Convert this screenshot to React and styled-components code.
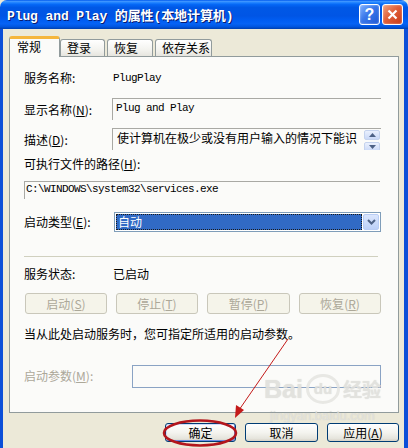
import React from "react";
import styled, { createGlobalStyle } from "styled-components";

const GlobalStyle = createGlobalStyle`
  html, body {
    margin: 0;
    padding: 0;
    background: #ece9d8;
  }
  body {
    font-family: "Noto Sans CJK SC", "Liberation Sans", sans-serif;
    font-size: 12px;
  }
`;

const Window = styled.div`
  position: relative;
  width: 408px;
  height: 448px;
  overflow: hidden;
  display: flex;
  flex-direction: column;
`;

const TitleBar = styled.div`
  height: 29px;
  flex: none;
  display: flex;
  align-items: center;
  padding: 0 5px 0 7px;
  border-radius: 7px 7px 0 0;
  background: linear-gradient(
    to bottom,
    #0058ee 0%,
    #3d95ff 5%,
    #1a7fff 10%,
    #0466f5 16%,
    #0058e6 26%,
    #0055e5 55%,
    #005df2 70%,
    #0663f5 82%,
    #0056e0 92%,
    #003fae 100%
  );
`;

const Title = styled.div`
  flex: 1;
  color: #fff;
  font-family: "Liberation Mono", "Noto Sans CJK SC", monospace;
  font-weight: bold;
  font-size: 13px;
  letter-spacing: -0.1px;
  text-shadow: 1px 1px 0 #0a1a6e;
  white-space: nowrap;
`;

const CapButton = styled.div`
  width: 19px;
  height: 19px;
  margin-left: 2px;
  border: 1px solid #fff;
  border-radius: 3px;
  display: flex;
  align-items: center;
  justify-content: center;
  color: #fff;
  font-family: "Liberation Sans", sans-serif;
  font-weight: bold;
  font-size: 16px;
  box-shadow: inset 0 0 2px rgba(255, 255, 255, 0.6);
  background: ${(p) =>
    p.$close
      ? "linear-gradient(135deg, #f0a07e 0%, #e0603a 45%, #c73a18 100%)"
      : "linear-gradient(135deg, #7fb0ff 0%, #3a78ea 45%, #1e57d4 100%)"};
`;

const Body = styled.div`
  flex: 1;
  background: #ece9d8;
  border-left: 3px solid #0c4fd8;
  border-right: 4px solid #0c4fd8;
  padding: 7px 5px 0 6px;
  display: flex;
  flex-direction: column;
`;

const TabStrip = styled.div`
  height: 20px;
  display: flex;
  align-items: flex-end;
`;

const Tab = styled.div`
  position: relative;
  z-index: ${(p) => (p.$active ? 2 : 1)};
  box-sizing: border-box;
  width: ${(p) => p.$w}px;
  margin-left: ${(p) => p.$ml || 0}px;
  height: ${(p) => (p.$active ? 21 : 17)}px;
  margin-bottom: ${(p) => (p.$active ? -1 : 0)}px;
  border: 1px solid #919b9c;
  border-bottom: none;
  border-top: ${(p) => (p.$active ? "3px solid #f5b63c" : "1px solid #919b9c")};
  border-radius: 3px 3px 0 0;
  background: ${(p) =>
    p.$active ? "#fbfbf9" : "linear-gradient(to bottom, #ffffff, #f3f3ef 60%, #e6e5df)"};
  line-height: ${(p) => (p.$active ? 16 : 15)}px;
  padding-left: ${(p) => (p.$active ? 7 : 6)}px;
  color: #000;
  white-space: nowrap;
`;

const Panel = styled.div`
  box-sizing: border-box;
  height: 357px;
  border: 1px solid #919b9c;
  background: #fbfbf9;
  padding: 0 17px 0 14px;
  display: flex;
  flex-direction: column;
`;

const Row = styled.div`
  display: flex;
  align-items: ${(p) => p.$align || "center"};
  margin-top: ${(p) => p.$mt || 0}px;
`;

const Label = styled.div`
  flex: none;
  width: ${(p) => p.$w || 88}px;
  line-height: 16px;
  padding-top: ${(p) => p.$pt || 0}px;
  color: ${(p) => (p.$disabled ? "#aca899" : "#000")};
  white-space: nowrap;
`;

const Value = styled.div`
  line-height: 16px;
  font-family: ${(p) =>
    p.$mono ? '"Liberation Mono", monospace' : '"Noto Sans CJK SC", sans-serif'};
  font-size: ${(p) => (p.$mono ? 11 : 12)}px;
  letter-spacing: ${(p) => (p.$mono ? -0.6 : 0)}px;
`;

const Field = styled.div`
  box-sizing: border-box;
  flex: ${(p) => (p.$w ? "none" : 1)};
  width: ${(p) => (p.$w ? `${p.$w}px` : "auto")};
  height: ${(p) => p.$h}px;
  border-top: 1px solid #a9a9a4;
  border-left: 1px solid #a9a9a4;
  padding: ${(p) => p.$pad || "2px 0 0 3px"};
  display: flex;
  align-items: flex-start;
  white-space: nowrap;
  overflow: hidden;
`;

const MonoText = styled.span`
  font-family: "Liberation Mono", monospace;
  font-size: 11px;
  letter-spacing: -0.6px;
  line-height: ${(p) => p.$lh || 14}px;
  padding-top: ${(p) => p.$pt || 0}px;
  color: #000;
`;

const CjkText = styled.span`
  font-size: 12px;
  line-height: 15px;
  color: #000;
`;

const Spin = styled.div`
  margin-left: auto;
  margin-right: 1px;
  display: flex;
  flex-direction: column;
  gap: 2px;
`;

const SpinBtn = styled.div`
  width: 14px;
  height: 8px;
  border: 1px solid #c5d3ee;
  border-radius: 2px;
  background: linear-gradient(to bottom, #eaf0fd, #c9d8f7);
  display: flex;
  align-items: center;
  justify-content: center;
`;

const Combo = styled.div`
  box-sizing: border-box;
  flex: 1;
  height: 20px;
  border: 1px solid #7f9db9;
  background: #fff;
  padding: 1px;
  display: flex;
`;

const ComboSel = styled.div`
  flex: 1;
  box-sizing: border-box;
  background: #316ac5;
  border: 1px dotted #1a1a1a;
  color: #fff;
  line-height: 14px;
  padding-left: 1px;
`;

const ComboBtn = styled.div`
  width: 16px;
  flex: none;
  margin-left: 1px;
  border-radius: 2px;
  border: 1px solid #b9cdf5;
  box-sizing: border-box;
  background: linear-gradient(to bottom, #dbe6fd, #bcd0f8);
  display: flex;
  align-items: center;
  justify-content: center;
`;

const Separator = styled.div`
  height: 0;
  border-top: 1px solid #d0d0bf;
  margin: 24px 3px 0 0;
`;

const ButtonRow = styled.div`
  display: flex;
  justify-content: space-between;
  margin: 11px 0 0 1px;
`;

const SysButton = styled.div`
  box-sizing: border-box;
  width: ${(p) => p.$w}px;
  height: ${(p) => p.$h || 21}px;
  border-radius: 3px;
  border: 1px solid ${(p) => (p.$disabled ? "#c9c7ba" : "#003c74")};
  background: ${(p) =>
    p.$disabled
      ? "#f5f4ea"
      : "linear-gradient(to bottom, #ffffff 0%, #f4f4ef 50%, #e6e5dd 85%, #d6d0c5 100%)"};
  box-shadow: ${(p) =>
    p.$default ? "inset -1px -1px 0 #6c8ee8, inset 1px 1px 0 #cfdcfb" : "none"};
  color: ${(p) => (p.$disabled ? "#aca899" : "#000")};
  display: flex;
  align-items: center;
  justify-content: center;
  line-height: 16px;
`;

const Note = styled.div`
  margin-top: 12px;
  line-height: 16px;
  color: #000;
`;

const ParamField = styled.div`
  box-sizing: border-box;
  flex: 1;
  height: 23px;
  border: 1px solid #8aa3c4;
  background: #fbfbf9;
`;

const Footer = styled.div`
  display: flex;
  justify-content: flex-end;
  gap: 9px;
  margin-top: 10px;
`;

const Overlay = styled.svg`
  position: absolute;
  left: 0;
  top: 0;
  pointer-events: none;
`;

const Watermark = styled.div`
  position: absolute;
  left: 264px;
  top: 374px;
  pointer-events: none;
  display: flex;
  flex-direction: column;
  align-items: center;
  color: rgba(228, 228, 224, 0.85);
  text-shadow: 0 0 1px rgba(175, 175, 170, 0.45);
`;

const MarkLogo = styled.div`
  display: flex;
  align-items: center;
  gap: 3px;
  font-family: "Liberation Sans", sans-serif;
  font-weight: bold;
  font-size: 25px;
  line-height: 28px;
`;

const MarkDu = styled.span`
  font-size: 15px;
  border-radius: 50%;
  width: 28px;
  height: 24px;
  line-height: 24px;
  text-align: center;
  border: 3px solid rgba(228, 228, 224, 0.85);
`;

const MarkCn = styled.span`
  font-family: "Noto Sans CJK SC", sans-serif;
  font-size: 19px;
`;

const MarkUrl = styled.div`
  font-family: "Liberation Sans", sans-serif;
  font-size: 13px;
  line-height: 14px;
  margin-top: 5px;
`;

const Key = ({ k }) => (
  <>
    (<u>{k}</u>)
  </>
);

const TriUp = () => (
  <svg width="7" height="4" viewBox="0 0 7 4">
    <path d="M0 4 L3.5 0 L7 4 Z" fill="#4d6185" />
  </svg>
);

const TriDown = () => (
  <svg width="7" height="4" viewBox="0 0 7 4">
    <path d="M0 0 L3.5 4 L7 0 Z" fill="#4d6185" />
  </svg>
);

const Chevron = () => (
  <svg width="9" height="6" viewBox="0 0 9 6">
    <path d="M1 1 L4.5 4.5 L8 1" fill="none" stroke="#4d6185" strokeWidth="2" />
  </svg>
);

const CloseX = () => (
  <svg width="11" height="11" viewBox="0 0 11 11">
    <path d="M1.5 1.5 L9.5 9.5 M9.5 1.5 L1.5 9.5" stroke="#fff" strokeWidth="2.2" />
  </svg>
);

export default function App() {
  return (
    <>
      <GlobalStyle />
      <Window>
        <TitleBar>
          <Title>Plug and Play 的属性(本地计算机)</Title>
          <CapButton>?</CapButton>
          <CapButton $close>
            <CloseX />
          </CapButton>
        </TitleBar>

        <Body>
          <TabStrip>
            <Tab $active $w={51}>常规</Tab>
            <Tab $w={45}>登录</Tab>
            <Tab $w={46} $ml={2}>恢复</Tab>
            <Tab $w={57} $ml={2}>依存关系</Tab>
          </TabStrip>

          <Panel>
            <Row $mt={13}>
              <Label $w={89}>服务名称:</Label>
              <Value $mono>PlugPlay</Value>
            </Row>

            <Row $mt={12} $align="flex-start">
              <Label $pt={4}>
                显示名称<Key k="N" />:
              </Label>
              <Field $h={22}>
                <MonoText>Plug and Play</MonoText>
              </Field>
            </Row>

            <Row $mt={8} $align="flex-start">
              <Label $pt={4}>
                描述<Key k="D" />:
              </Label>
              <Field $h={22} $pad="1px 0 0 4px">
                <CjkText>使计算机在极少或没有用户输入的情况下能识</CjkText>
                <Spin>
                  <SpinBtn>
                    <TriUp />
                  </SpinBtn>
                  <SpinBtn>
                    <TriDown />
                  </SpinBtn>
                </Spin>
              </Field>
            </Row>

            <Row $mt={6}>
              <Label $w={200}>
                可执行文件的路径<Key k="H" />:
              </Label>
            </Row>

            <Row $mt={9}>
              <Field $h={18} $w={356} $pad="0 0 0 1px">
                <MonoText $lh={13} $pt={1}>
                  C:\WINDOWS\system32\services.exe
                </MonoText>
              </Field>
            </Row>

            <Row $mt={13}>
              <Label $w={90}>
                启动类型<Key k="E" />:
              </Label>
              <Combo>
                <ComboSel>自动</ComboSel>
                <ComboBtn>
                  <Chevron />
                </ComboBtn>
              </Combo>
            </Row>

            <Separator />

            <Row $mt={9}>
              <Label $w={89}>服务状态:</Label>
              <Value>已启动</Value>
            </Row>

            <ButtonRow>
              <SysButton $disabled $w={82}>
                启动<Key k="S" />
              </SysButton>
              <SysButton $disabled $w={82}>
                停止<Key k="T" />
              </SysButton>
              <SysButton $disabled $w={83}>
                暂停<Key k="P" />
              </SysButton>
              <SysButton $disabled $w={82}>
                恢复<Key k="R" />
              </SysButton>
            </ButtonRow>

            <Note>当从此处启动服务时，您可指定所适用的启动参数。</Note>

            <Row $mt={23} $align="flex-start">
              <Label $w={108} $pt={3} $disabled>
                启动参数<Key k="M" />:
              </Label>
              <ParamField />
            </Row>
          </Panel>

          <Footer>
            <SysButton $default $w={71} $h={19}>
              确定
            </SysButton>
            <SysButton $w={73} $h={19}>
              取消
            </SysButton>
            <SysButton $w={72} $h={19}>
              应用<Key k="A" />
            </SysButton>
          </Footer>
        </Body>

        <Watermark>
          <MarkLogo>
            Bai<MarkDu>du</MarkDu>
            <MarkCn>经验</MarkCn>
          </MarkLogo>
          <MarkUrl>jingyan.baidu.com</MarkUrl>
        </Watermark>

        <Overlay width="408" height="448" viewBox="0 0 408 448">
          <line x1="288" y1="339" x2="239" y2="410" stroke="#c41a1a" strokeWidth="1" />
          <path d="M235 418 L236 405 L244 410 Z" fill="#c41a1a" />
          <ellipse
            cx="200"
            cy="433"
            rx="36"
            ry="12.5"
            fill="none"
            stroke="#b3161c"
            strokeWidth="2.6"
          />
        </Overlay>
      </Window>
    </>
  );
}
